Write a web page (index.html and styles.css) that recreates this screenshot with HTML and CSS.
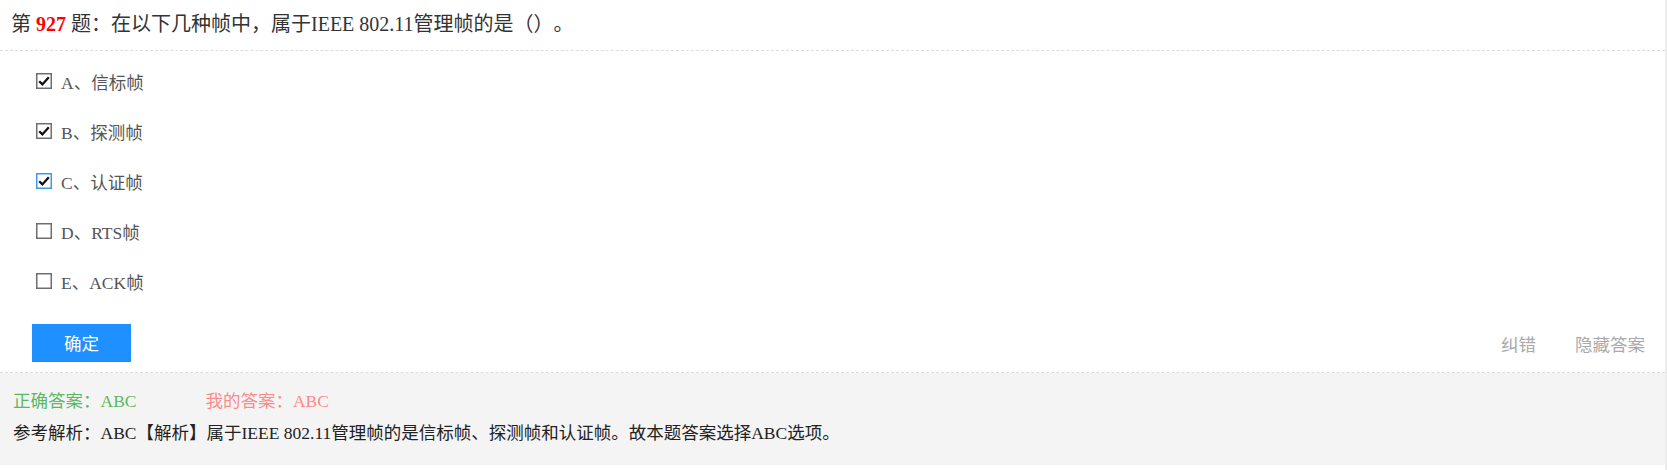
FILE: index.html
```html
<!DOCTYPE html>
<html lang="zh-CN">
<head>
<meta charset="utf-8">
<title>第927题</title>
<link rel="stylesheet" href="styles.css">
</head>
<body>
<div class="page">
  <div class="title">第 <span class="num">927</span> 题：在以下几种帧中，属于IEEE 802.11管理帧的是（）。</div>
  <div class="question">
    <ul class="options">
      <li class="option">
        <span class="cb"><svg width="16" height="16" viewBox="0 0 16 16"><rect x="0.75" y="0.75" width="14.5" height="14.5" fill="#fff" stroke="#6e6e6e" stroke-width="1.5"/><path d="M3.2 8.2 L6.4 11.4 L12.8 4.2" fill="none" stroke="#111" stroke-width="2.3"/></svg></span>
        <span class="label">A、信标帧</span>
      </li>
      <li class="option">
        <span class="cb"><svg width="16" height="16" viewBox="0 0 16 16"><rect x="0.75" y="0.75" width="14.5" height="14.5" fill="#fff" stroke="#6e6e6e" stroke-width="1.5"/><path d="M3.2 8.2 L6.4 11.4 L12.8 4.2" fill="none" stroke="#111" stroke-width="2.3"/></svg></span>
        <span class="label">B、探测帧</span>
      </li>
      <li class="option">
        <span class="cb"><svg width="16" height="16" viewBox="0 0 16 16"><rect x="0.75" y="0.75" width="14.5" height="14.5" fill="#fff" stroke="#3c9ae8" stroke-width="1.5"/><path d="M3.2 8.2 L6.4 11.4 L12.8 4.2" fill="none" stroke="#111" stroke-width="2.3"/></svg></span>
        <span class="label">C、认证帧</span>
      </li>
      <li class="option">
        <span class="cb"><svg width="16" height="16" viewBox="0 0 16 16"><rect x="0.75" y="0.75" width="14.5" height="14.5" fill="#fff" stroke="#6e6e6e" stroke-width="1.5"/></svg></span>
        <span class="label">D、RTS帧</span>
      </li>
      <li class="option">
        <span class="cb"><svg width="16" height="16" viewBox="0 0 16 16"><rect x="0.75" y="0.75" width="14.5" height="14.5" fill="#fff" stroke="#6e6e6e" stroke-width="1.5"/></svg></span>
        <span class="label">E、ACK帧</span>
      </li>
    </ul>
    <div class="actions">
      <button class="btn" type="button">确定</button>
      <div class="links">
        <a class="link">纠错</a>
        <a class="link">隐藏答案</a>
      </div>
    </div>
  </div>
  <div class="answer">
    <div class="answer-row">
      <span class="correct">正确答案：ABC</span>
      <span class="mine">我的答案：ABC</span>
    </div>
    <div class="analysis">参考解析：ABC【解析】属于IEEE 802.11管理帧的是信标帧、探测帧和认证帧。故本题答案选择ABC选项。</div>
  </div>
</div>
</body>
</html>
```
FILE: styles.css
```css
html, body {
  margin: 0;
  padding: 0;
  background: #fff;
}
body {
  min-height: 100vh;
  box-sizing: border-box;
  border-right: 2px solid #ececec;
  font-family: "Liberation Serif", "Noto Sans CJK SC", serif;
  text-spacing-trim: space-all;
}
.page {
  width: 100%;
}
.title {
  height: 50px;
  line-height: 48px;
  padding-left: 11px;
  font-size: 20px;
  color: #333;
  border-bottom: 1px dashed #dcdcdc;
  white-space: nowrap;
}
.num {
  color: #f00;
  font-weight: bold;
}
.question {
  border-bottom: 1px dashed #dcdcdc;
}
.options {
  list-style: none;
  margin: 0;
  padding: 5px 0 0 0;
}
.option {
  height: 50px;
  display: flex;
  align-items: center;
  padding-left: 36px;
  font-size: 17.5px;
  color: #555;
}
.cb {
  display: flex;
  width: 16px;
  height: 16px;
  margin-right: 9px;
  margin-top: -1px;
}
.actions {
  display: flex;
  align-items: center;
  justify-content: space-between;
  margin-top: 18px;
  padding: 0 20px 10px 32px;
}
.btn {
  width: 99px;
  height: 38px;
  border: none;
  background: #1e90ff;
  color: #fff;
  font-family: "Noto Sans CJK SC", sans-serif;
  font-size: 17.5px;
  line-height: 38px;
  padding: 0;
}
.links {
  display: flex;
  gap: 39px;
}
.link {
  font-family: "Noto Sans CJK SC", sans-serif;
  font-size: 17.5px;
  color: #aaa;
}
.answer {
  background: #f4f4f4;
  padding: 13px 13px 15px;
  font-size: 17.5px;
}
.answer-row {
  line-height: 30px;
  display: flex;
}
.correct {
  color: #5cb85c;
  margin-right: 69px;
}
.mine {
  color: #ff8a8a;
}
.analysis {
  line-height: 34px;
  color: #222;
}
```
